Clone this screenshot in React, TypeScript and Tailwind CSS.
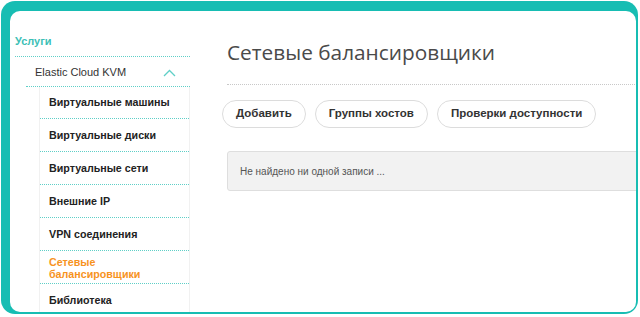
const subItems = [
  "Виртуальные машины",
  "Виртуальные диски",
  "Виртуальные сети",
  "Внешние IP",
  "VPN соединения",
];

function Chevron() {
  return (
    <svg width="13" height="8" viewBox="0 0 13 8" className="mr-[14px]">
      <polyline points="1,7 6.5,1.5 12,7" fill="none" stroke="#5fcfc7" strokeWidth="1.3" />
    </svg>
  );
}

function Sidebar() {
  return (
    <aside className="ml-[5px] w-[175px] shrink-0 pt-[24px] font-['Liberation_Sans',Arial,sans-serif] text-[11px] leading-[13px]">
      <div className="border-b border-dotted border-[#5fcfc7] pb-[8px] font-bold text-[#3dbfb6]">
        Услуги
      </div>
      <div className="ml-[11px] flex items-center justify-between border-b border-dotted border-[#5fcfc7] pt-[9px] pb-[7px] pl-[9px] text-[#333]">
        <span>Elastic Cloud KVM</span>
        <Chevron />
      </div>
      <ul className="ml-[24px] border-x border-[#f1f1f1] text-[10.7px]">
        {subItems.map((item) => (
          <li
            key={item}
            className="flex h-[33px] items-center border-b border-dotted border-[#5fcfc7] pl-[9px] font-bold text-[#222] first:h-[32px]"
          >
            {item}
          </li>
        ))}
        <li className="flex h-[33px] items-center border-b border-dotted border-[#5fcfc7] pl-[9px] pt-[1px] font-bold leading-[12px] text-[#f7931e]">
          Сетевые
          <br />
          балансировщики
        </li>
        <li className="flex h-[33px] items-center pl-[9px] font-bold text-[#222]">Библиотека</li>
      </ul>
    </aside>
  );
}

function Main() {
  return (
    <main className="ml-[32px] flex-1 pt-[27px] font-['Liberation_Sans',Arial,sans-serif]">
      <h1 className="ml-[5px] border-b border-dotted border-[#c8c8c8] pb-[18px] font-['Open_Sans',sans-serif] text-[20.8px] leading-[28px] text-[#4a4a4a]">
        Сетевые балансировщики
      </h1>
      <div className="mt-[15px] flex gap-[9px]">
        {["Добавить", "Группы хостов", "Проверки доступности"].map((b) => (
          <button
            key={b}
            className="h-[28px] rounded-full border border-[#dcdcdc] bg-white px-[13px] text-[11.5px] font-bold text-[#333]"
          >
            {b}
          </button>
        ))}
      </div>
      <div className="mt-[23px] ml-[5px] flex h-[40px] w-[440px] items-center rounded-[3px] border border-[#dedede] bg-[#f2f2f2] pl-[12px] text-[10px] text-[#555]">
        Не найдено ни одной записи ...
      </div>
    </main>
  );
}

export default function App() {
  return (
    <div className="h-[317px] w-[640px] bg-white pt-[1px] pl-[1px]">
      <div className="h-[313px] w-[637px] rounded-[14px] bg-[#17bdb3] pt-[10px] pl-[9px] pr-[2px] pb-[2px]">
        <div className="flex h-full overflow-hidden rounded-[10px] bg-white">
          <Sidebar />
          <Main />
        </div>
      </div>
    </div>
  );
}
